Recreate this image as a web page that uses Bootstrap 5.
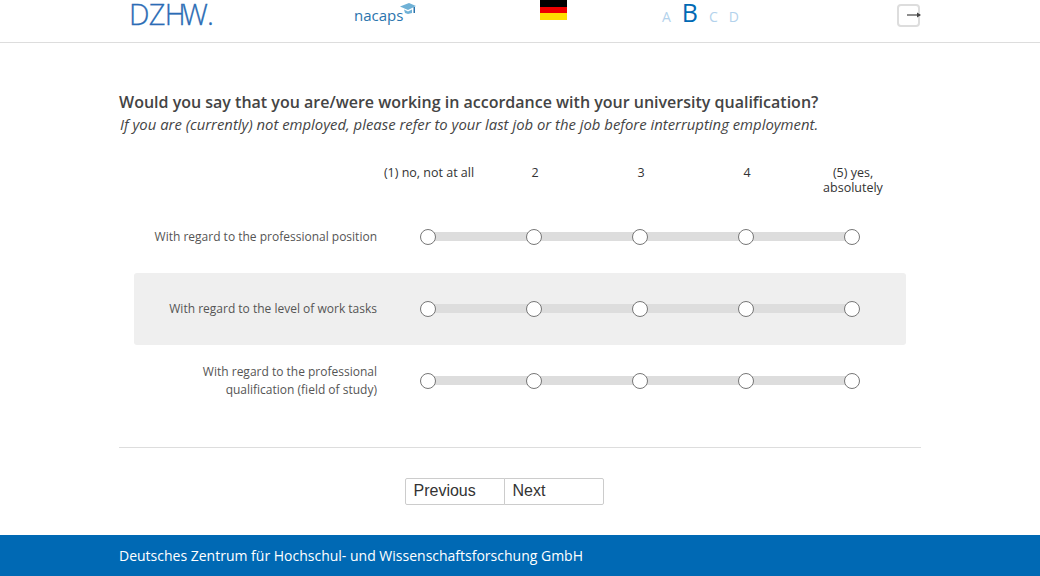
<!DOCTYPE html>
<html lang="en">

<head>
  <meta charset="UTF-8">
  <meta name="viewport" content="width=device-width, initial-scale=1.0">
  <title>Survey</title>
  <link href="https://cdn.jsdelivr.net/npm/bootstrap@5.3.0/dist/css/bootstrap.min.css" rel="stylesheet">
  <style>
    html, body { height: 100%; }
    body { font-family: "Open Sans", sans-serif; color: #333; background: #fff; overflow: hidden; }
    .page-wrap { width: 802px; margin-left: 119px; }
    .top-bar { height: 43px; border-bottom: 1px solid #ddd; overflow: hidden; }
    .top-inner { height: 42px; }
    .logo-dzhw { width: 235px; padding-left: 10px; font-size: 29px; line-height: 28px; color: #2b6cb5; letter-spacing: -.7px; font-weight: 300; -webkit-text-stroke: .3px #2b6cb5; }
    .logo-dzhw .join-h { margin-right: -3px; }
    .logo-nacaps { width: 186px; position: relative; font-size: 15px; line-height: 20px; padding-top: 5px; color: #2a74ad; }
    .cap-icon { position: absolute; left: 46px; top: 3px; }
    .flag-col { width: 122px; }
    .de-flag { width: 27px; height: 20px; background: linear-gradient(#000 33%, #e00 33%, #e00 66%, #ffdf00 66%); }
    .size-links { width: 235px; color: #b3d2ec; font-size: 14px; line-height: 24px; gap: 11px; }
    .size-links .size-on { color: #0069b4; font-size: 25px; }
    .exit-btn { width: 23px; height: 23px; margin-top: 4px; border: 2px solid #ddd; border-radius: 4px; position: relative; }
    .exit-btn svg { position: absolute; left: 8px; top: 5px; }
    .q-title { font-size: 16px; font-weight: 600; line-height: 22px; margin-top: 48px; color: #444; }
    .q-hint { font-size: 14.86px; font-style: italic; line-height: 22px; padding-left: 1px; color: #444; }
    .scale-grid { display: grid; grid-template-columns: 241px repeat(5, 106px); width: 772px; margin-left: 15px; }
    .scale-head { margin-top: 30px; height: 36px; font-size: 12.5px; line-height: 15px; text-align: center; font-weight: 500; padding-left: 1px; }
    .scale-head > div { padding: 0 6px; }
    .scale-row { height: 72px; align-items: center; border-radius: 3px; }
    .scale-row.shaded { background: #efefef; }
    .item-label { font-size: 12px; line-height: 18px; text-align: right; color: #555; padding-left: 10px; margin-right: -2px; }
    .dot-cell { position: relative; height: 16px; display: flex; justify-content: center; }
    .dot-cell::after { content: ""; position: absolute; left: 50%; width: 100%; top: 3px; height: 9px; background: #ddd; }
    .dot-cell:last-child::after { display: none; }
    .dot { position: relative; z-index: 1; width: 16px; height: 16px; border: 1px solid #777; border-radius: 50%; background: #fff; }
    .rule-line { border-top: 1px solid #ddd; margin-top: 30px; }
    .nav-btns { margin-top: 30px; margin-left: 286px; width: 199px; }
    .nav-btns .btn { width: 100px; height: 27px; padding: 0 8px 2px 7.500px; text-align: left; font-family: "Liberation Sans", sans-serif; font-size: 16px; line-height: 21px; color: #333; background: #fff; border-color: #ccc; border-radius: 2px; }
    .site-foot { position: fixed; left: 0; right: 0; bottom: 0; height: 41px; background: #0069b4; color: #fff; font-size: 14px; line-height: 41px; }
  </style>
</head>

<body>

  <!-- Kopfzeile -->
  <div class="top-bar">
    <div class="page-wrap top-inner d-flex">
      <div class="logo-dzhw">DZ<span class="join-h">H</span>W.</div>
      <div class="logo-nacaps">nacaps
        <svg class="cap-icon" width="16" height="12" viewBox="0 0 16 12">
          <path d="M0 3.500 L9 0 L16 3 L8 7 Z" fill="#6fb1d6" />
          <path d="M4 6.500 L8 8.500 L12 6.500 L12 10 L8 11 L5 10 Z" fill="#6fb1d6" />
          <rect x="13.500" y="4" width="1.500" height="6" fill="#2a74ad" />
        </svg>
      </div>
      <div class="flag-col"><div class="de-flag"></div></div>
      <div class="size-links d-flex align-items-baseline">
        <span>A</span><span class="size-on">B</span><span>C</span><span>D</span>
      </div>
      <div class="exit-btn">
        <svg width="15" height="8" viewBox="0 0 15 8">
          <path d="M0 4 H13" stroke="#444" stroke-width="1.2" />
          <path d="M10 1.500 L14 4 L10 6.500 Z" fill="#444" />
        </svg>
      </div>
    </div>
  </div>

  <div class="page-wrap">
    <div class="q-title">Would you say that you are/were working in accordance with your university qualification?</div>
    <div class="q-hint">If you are (currently) not employed, please refer to your last job or the job before interrupting employment.</div>

    <!-- Skala -->
    <div class="scale-grid scale-head">
      <div></div>
      <div>(1) no, not at all</div>
      <div>2</div>
      <div>3</div>
      <div>4</div>
      <div>(5) yes, absolutely</div>
    </div>

    <div class="scale-grid scale-row">
      <div class="item-label">With regard to the professional position</div>
      <div class="dot-cell"><span class="dot"></span></div>
      <div class="dot-cell"><span class="dot"></span></div>
      <div class="dot-cell"><span class="dot"></span></div>
      <div class="dot-cell"><span class="dot"></span></div>
      <div class="dot-cell"><span class="dot"></span></div>
    </div>
    <div class="scale-grid scale-row shaded">
      <div class="item-label">With regard to the level of work tasks</div>
      <div class="dot-cell"><span class="dot"></span></div>
      <div class="dot-cell"><span class="dot"></span></div>
      <div class="dot-cell"><span class="dot"></span></div>
      <div class="dot-cell"><span class="dot"></span></div>
      <div class="dot-cell"><span class="dot"></span></div>
    </div>
    <div class="scale-grid scale-row">
      <div class="item-label">With regard to the professional qualification (field of study)</div>
      <div class="dot-cell"><span class="dot"></span></div>
      <div class="dot-cell"><span class="dot"></span></div>
      <div class="dot-cell"><span class="dot"></span></div>
      <div class="dot-cell"><span class="dot"></span></div>
      <div class="dot-cell"><span class="dot"></span></div>
    </div>

    <div class="rule-line"></div>

    <div class="btn-group nav-btns d-flex" role="group">
      <button type="button" class="btn">Previous</button>
      <button type="button" class="btn">Next</button>
    </div>
  </div>

  <footer class="site-foot">
    <div class="page-wrap">Deutsches Zentrum für Hochschul- und Wissenschaftsforschung GmbH</div>
  </footer>

  <script src="https://cdn.jsdelivr.net/npm/bootstrap@5.3.0/dist/js/bootstrap.bundle.min.js"></script>
</body>

</html>
